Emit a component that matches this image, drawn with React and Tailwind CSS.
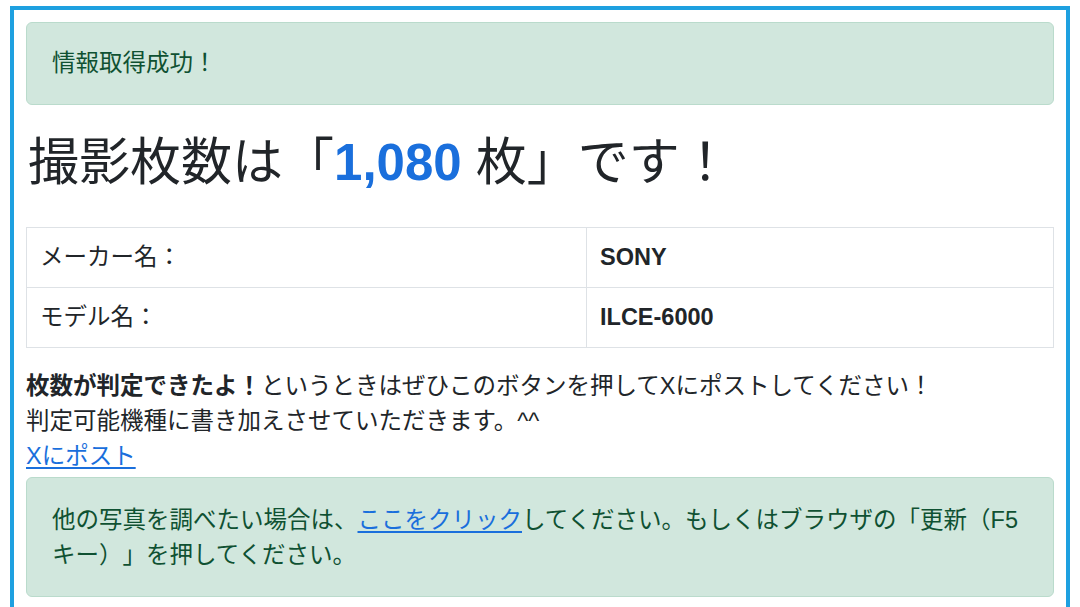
export default function App() {
  const font = "font-['Liberation_Sans','Noto_Sans_CJK_JP',sans-serif]";

  return (
    <div className={`min-h-screen bg-white px-[10px] pt-[6px] text-[#212529] [text-spacing-trim:space-all] ${font}`}>
      <div className="border-4 border-[#1ea0e0] p-[12px]">
        {/* success alert */}
        <div className="rounded-[6px] border border-[#badbcc] bg-[#d1e7dd] px-[25px] py-[23px] text-[23.5px] leading-[35px] text-[#0f5132]">
          情報取得成功！
        </div>

        {/* heading */}
        <h1 className="mt-[28px] mb-[34px] pl-[2px] text-[51px] leading-[60px] font-normal">
          撮影枚数は「<span className="font-bold text-[#1a6fdc]">1,080</span> 枚」です！
        </h1>

        {/* camera info */}
        <table className="w-full table-fixed border-collapse text-[23.5px] leading-[35px]">
          <colgroup>
            <col className="w-[560px]" />
            <col />
          </colgroup>
          <tbody>
            <tr>
              <td className="border border-[#dee2e6] px-[13px] py-[12px]">メーカー名：</td>
              <td className="border border-[#dee2e6] px-[13px] py-[12px] font-bold">SONY</td>
            </tr>
            <tr>
              <td className="border border-[#dee2e6] px-[13px] py-[12px]">モデル名：</td>
              <td className="border border-[#dee2e6] px-[13px] py-[12px] font-bold">ILCE-6000</td>
            </tr>
          </tbody>
        </table>

        <div className="mt-[21px] text-[23.5px] leading-[35px]">
          <p>
            <b>枚数が判定できたよ！</b>
            というときはぜひこのボタンを押してXにポストしてください！
            <br />
            判定可能機種に書き加えさせていただきます。^^
          </p>
          <a href="#" className="text-[#1a6fdc] underline underline-offset-[3px]">
            Xにポスト
          </a>
        </div>

        {/* retry alert */}
        <div className="mt-[3px] rounded-[6px] border border-[#badbcc] bg-[#d1e7dd] px-[25px] pt-[25px] pb-[23px] text-[23.5px] leading-[35px] text-[#0f5132]">
          他の写真を調べたい場合は、
          <a href="#" className="text-[#1a6fdc] underline underline-offset-[3px]">
            ここをクリック
          </a>
          してください。もしくはブラウザの「更新（F5キー）」を押してください。
        </div>
      </div>
    </div>
  );
}
